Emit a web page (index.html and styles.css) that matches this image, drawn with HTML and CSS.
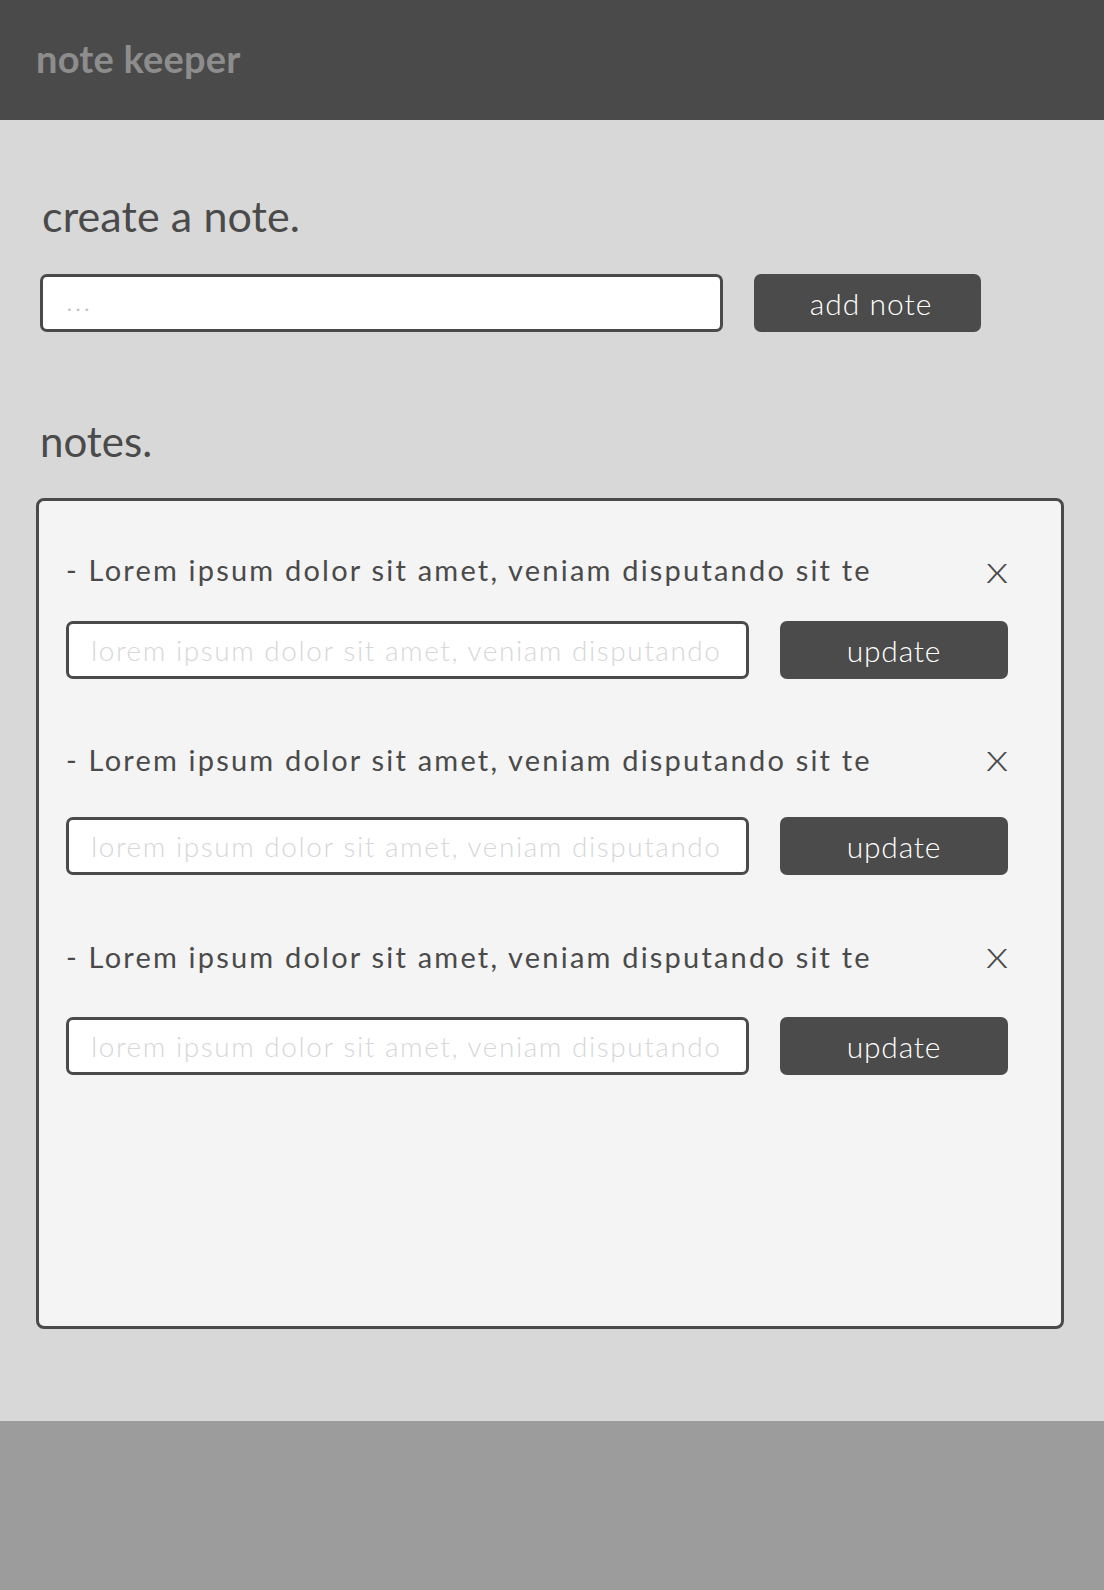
FILE: index.html
```html
<!DOCTYPE html>
<html lang="en">
<head>
<meta charset="utf-8">
<title>note keeper</title>
<link rel="stylesheet" href="styles.css">
</head>
<body>
<header class="topbar">
  <h1 class="brand">note keeper</h1>
</header>
<main class="main">
  <h2 class="section-title section-title--create">create a note.</h2>
  <form class="create-row">
    <input class="field field--create" type="text" placeholder="...">
    <button class="btn btn--add" type="button">add note</button>
  </form>
  <h2 class="section-title section-title--notes">notes.</h2>
  <section class="notes-box">
    <div class="note">
      <div class="note-head">
        <span class="note-text">- Lorem ipsum dolor sit amet, veniam disputando sit te</span>
        <span class="note-remove">x</span>
      </div>
      <div class="note-edit">
        <input class="field field--note" type="text" placeholder="lorem ipsum dolor sit amet, veniam disputando">
        <button class="btn btn--update" type="button">update</button>
      </div>
    </div>
    <div class="note">
      <div class="note-head">
        <span class="note-text">- Lorem ipsum dolor sit amet, veniam disputando sit te</span>
        <span class="note-remove">x</span>
      </div>
      <div class="note-edit">
        <input class="field field--note" type="text" placeholder="lorem ipsum dolor sit amet, veniam disputando">
        <button class="btn btn--update" type="button">update</button>
      </div>
    </div>
    <div class="note">
      <div class="note-head">
        <span class="note-text">- Lorem ipsum dolor sit amet, veniam disputando sit te</span>
        <span class="note-remove">x</span>
      </div>
      <div class="note-edit">
        <input class="field field--note" type="text" placeholder="lorem ipsum dolor sit amet, veniam disputando">
        <button class="btn btn--update" type="button">update</button>
      </div>
    </div>
  </section>
</main>
<footer class="footer"></footer>
</body>
</html>
```
FILE: styles.css
```css
* {
  box-sizing: border-box;
}

html, body {
  margin: 0;
  padding: 0;
}

body {
  width: 1104px;
  font-family: Lato, "Noto Sans", sans-serif;
  color: #4a4a4a;
  background: #d8d8d8;
}

.topbar {
  height: 120px;
  background: #4a4a4a;
  padding: 34px 0 0 36px;
}

.brand {
  margin: 0;
  font-size: 38px;
  line-height: 48px;
  font-weight: 700;
  color: #8d8d8d;
  letter-spacing: 0.2px;
}

.main {
  height: 1301px;
  padding: 71px 0 0 36px;
  background: #d8d8d8;
}

.section-title {
  margin: 0;
  font-size: 42px;
  line-height: 50px;
  font-weight: 400;
  color: #4a4a4a;
}

.section-title--create {
  margin-left: 6px;
  font-size: 43px;
  letter-spacing: 0.1px;
}

.section-title--notes {
  margin: 84px 0 0 4px;
}

.create-row {
  display: flex;
  margin: 33px 0 0 4px;
}

.field {
  height: 58px;
  border: 3px solid #4a4a4a;
  border-radius: 7px;
  background: #fff;
  font-family: Lato, "Noto Sans", sans-serif;
  outline: none;
}

.field--create {
  width: 683px;
  padding: 0 0 0 24px;
  font-size: 20px;
}

.field--create::placeholder {
  color: #bcbcbc;
  letter-spacing: 4px;
}

.btn {
  height: 58px;
  border: 0;
  border-radius: 7px;
  background: #4b4b4b;
  color: #fff;
  font-family: Lato, "Noto Sans", sans-serif;
  font-size: 30px;
  font-weight: 300;
  letter-spacing: 0.8px;
  padding: 0;
}

.btn--add {
  width: 227px;
  margin-left: 31px;
  padding-left: 7px;
  font-size: 30px;
  letter-spacing: 1px;
}

.notes-box {
  width: 1028px;
  height: 831px;
  margin-top: 32px;
  border: 3px solid #4a4a4a;
  border-radius: 8px;
  background: #f4f4f4;
  padding: 51px 53px 0 27px;
}

.note + .note {
  margin-top: 63px;
}

.note-head {
  display: flex;
  justify-content: space-between;
  align-items: baseline;
  height: 36px;
}

.note-text {
  font-size: 29px;
  line-height: 36px;
  letter-spacing: 2.2px;
  color: #4a4a4a;
}

.note-remove {
  display: inline-block;
  font-size: 37px;
  line-height: 28px;
  font-weight: 300;
  color: #4a4a4a;
  transform: scaleX(1.3);
  transform-origin: right center;
}

.note:first-child .note-remove {
  position: relative;
  top: 2px;
}

.note-edit {
  display: flex;
  margin-top: 33px;
}

.note:nth-child(2) .note-edit {
  margin-top: 39px;
}

.note:nth-child(3) {
  margin-top: 64px;
}

.note:nth-child(3) .note-edit {
  margin-top: 42px;
}

.field--note {
  width: 683px;
  padding: 0 0 0 22px;
  font-size: 28px;
  font-weight: 300;
  letter-spacing: 1.55px;
}

.field--note::placeholder {
  color: #d7d7d7;
}

.btn--update {
  width: 228px;
  margin-left: 31px;
}

.footer {
  height: 169px;
  background: #9c9c9c;
}
```
